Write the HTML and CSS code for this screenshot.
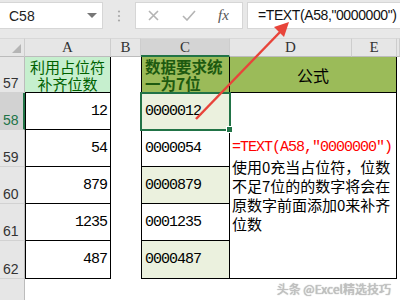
FILE: index.html
```html
<!DOCTYPE html>
<html lang="zh-CN">
<head>
    <meta charset="UTF-8">
    <meta name="viewport" content="width=device-width, initial-scale=1.0">
    <title>TEXT 占位符</title>
    <link rel="stylesheet" href="styles.css">
</head>
<body>
    <div class="toolbar">
        <div class="name-box">
            <span class="name">C58</span>
            <span class="caret"></span>
        </div>
        <div class="grip">
            <svg width="4" height="12" viewBox="0 0 4 12"><circle cx="2" cy="1.5" r="1.1"/><circle cx="2" cy="6" r="1.1"/><circle cx="2" cy="10.5" r="1.1"/></svg>
        </div>
        <div class="fx-box">
            <svg class="btn-x" width="11" height="11" viewBox="0 0 11 11"><path d="M1 1 L10 10 M10 1 L1 10"/></svg>
            <svg class="btn-ok" width="14" height="11" viewBox="0 0 14 11"><path d="M1 6 L5 10 L13 1"/></svg>
            <span class="fx">fx</span>
        </div>
        <div class="formula">=TEXT(A58,"0000000")</div>
    </div>

    <div class="sheet">
        <!-- column headers -->
        <div class="hd corner"></div>
        <div class="hd">A</div>
        <div class="hd">B</div>
        <div class="hd hd-sel">C</div>
        <div class="hd">D</div>
        <div class="hd">E</div>
        <div class="hd"></div>

        <!-- row 57 -->
        <div class="rh">57</div>
        <div class="cell title-a"><span class="ln">利用占位符</span><span class="ln">补齐位数</span></div>
        <div class="cell"></div>
        <div class="cell title-c"><span class="ln">数据要求统</span><span class="ln">一为7位</span></div>
        <div class="cell title-d">公式</div>
        <div class="cell"></div>

        <!-- merged D58:E62 -->
        <div class="cell note">
            <span class="ln note-formula">=TEXT(A58,"0000000")</span>
            <span class="ln">使用0充当占位符，位数</span>
            <span class="ln">不足7位的的数字将会在</span>
            <span class="ln">原数字前面添加0来补齐</span>
            <span class="ln">位数</span>
        </div>

        <div class="rh rh-sel">58</div>
        <div class="cell box edge num">12</div>
        <div class="cell"></div>
        <div class="cell box edge code alt active">0000012</div>
        <div class="cell"></div>

        <div class="rh">59</div>
        <div class="cell box edge num">54</div>
        <div class="cell"></div>
        <div class="cell box edge code">0000054</div>
        <div class="cell"></div>

        <div class="rh">60</div>
        <div class="cell box edge num">879</div>
        <div class="cell"></div>
        <div class="cell box edge code alt">0000879</div>
        <div class="cell"></div>

        <div class="rh">61</div>
        <div class="cell box edge num">1235</div>
        <div class="cell"></div>
        <div class="cell box edge code">0001235</div>
        <div class="cell"></div>

        <div class="rh">62</div>
        <div class="cell box edge num">487</div>
        <div class="cell"></div>
        <div class="cell box edge code alt">0000487</div>
        <div class="cell"></div>

        <div class="rh">63</div>
        <div class="cell rest"></div>
    </div>

    <svg class="arrow" width="400" height="300" viewBox="0 0 400 300">
        <line x1="196" y1="119" x2="281" y2="31"/>
        <polygon points="289,22 284,37 274,27"/>
    </svg>

    <div class="watermark">头条 @Excel精选技巧</div>
</body>
</html>
```

FILE: styles.css
```css
body {
    margin: 0;
    width: 400px;
    height: 300px;
    overflow: hidden;
    position: relative;
    background-color: #fff;
    font-family: "Noto Sans CJK SC", sans-serif;
    color: #000;
}

/* formula bar */
.toolbar {
    height: 38px;
    box-sizing: border-box;
    padding-top: 2px;
    background-color: #e8e8e8;
    display: flex;
    align-items: flex-start;
}

.name-box {
    width: 103px;
    height: 27px;
    box-sizing: border-box;
    background-color: #fff;
    border: 1px solid #d6d6d6;
    border-left: none;
    display: flex;
    align-items: center;
    justify-content: space-between;
    padding: 0 5px 0 9px;
}

.name {
    font-family: "Liberation Sans", sans-serif;
    font-size: 14px;
    color: #222;
}

.caret {
    width: 0;
    height: 0;
    border-left: 5px solid transparent;
    border-right: 5px solid transparent;
    border-top: 5px solid #777;
}

.grip {
    width: 32px;
    height: 27px;
    display: flex;
    align-items: center;
    justify-content: center;
}

.grip svg {
    fill: #a8a8a8;
}

.fx-box {
    width: 108px;
    height: 27px;
    box-sizing: border-box;
    background-color: #fff;
    border: 1px solid #d6d6d6;
    display: flex;
    align-items: center;
    margin-right: 4px;
}

.fx-box svg {
    fill: none;
    stroke: #b4b4b4;
    stroke-width: 1.6;
}

.btn-x {
    margin-left: 12px;
}

.btn-ok {
    margin-left: 23px;
}

.fx {
    margin-left: 22px;
    font-family: "Liberation Serif", serif;
    font-style: italic;
    font-size: 15px;
    color: #555;
}

.formula {
    flex: 1;
    height: 27px;
    box-sizing: border-box;
    background-color: #fff;
    border: 1px solid #d6d6d6;
    border-right: none;
    padding-left: 10px;
    font-family: "Liberation Sans", sans-serif;
    font-size: 14px;
    letter-spacing: -0.4px;
    line-height: 25px;
    color: #111;
}

/* grid */
.sheet {
    display: grid;
    grid-template-columns: 25px 86px 30px 89px 122px 45px 1fr;
    grid-template-rows: 19px 36px 37px 37px 37px 37px 38px 37px;
}

.hd {
    box-sizing: border-box;
    background-color: #e6e6e6;
    border-right: 1px solid #cdcdcd;
    border-bottom: 1px solid #bcbcbc;
    border-top: 1px solid #d8d8d8;
    font-family: "Liberation Serif", serif;
    font-size: 15px;
    line-height: 17px;
    text-align: center;
    color: #333;
}

.corner {
    position: relative;
}

.corner::after {
    content: "";
    position: absolute;
    right: 3px;
    bottom: 3px;
    border-left: 9px solid transparent;
    border-bottom: 9px solid #b5b5b5;
}

.hd-sel {
    background-color: #d4d4d4;
    border-bottom: 2px solid #217346;
}

.rh {
    box-sizing: border-box;
    background-color: #e6e6e6;
    border-right: 1px solid #bcbcbc;
    border-bottom: 1px solid #d2d2d2;
    font-family: "Liberation Sans", sans-serif;
    font-size: 14px;
    line-height: 16px;
    color: #333;
    display: flex;
    align-items: flex-end;
    padding: 0 0 1px 3px;
}

.rh-sel {
    background-color: #d2d2d2;
    border-right: 2px solid #217346;
    color: #217346;
}

.cell {
    box-sizing: border-box;
    background-color: #fff;
}

.ln {
    display: block;
    height: 17px;
    line-height: 17px;
    white-space: nowrap;
}

.box {
    border-right: 1px solid #000;
    border-bottom: 1px solid #000;
}

.edge {
    border-left: 1px solid #000;
}

.title-a {
    background-color: #c6efce;
    color: #006100;
    border-right: 1px solid #000;
    border-bottom: 1px solid #000;
    font-size: 15px;
    text-align: center;
    display: flex;
    flex-direction: column;
    justify-content: center;
}

.title-c {
    background-color: #9bbb59;
    color: #1d5a10;
    font-weight: bold;
    border: 1px solid #000;
    border-top: none;
    font-size: 15.5px;
    padding-left: 3px;
    display: flex;
    flex-direction: column;
    justify-content: center;
}

.title-d {
    grid-column: span 2;
    background-color: #9bbb59;
    border-right: 1px solid #000;
    border-bottom: 1px solid #000;
    font-size: 16px;
    display: flex;
    align-items: center;
    justify-content: center;
}

.num,
.code {
    font-family: "Liberation Mono", monospace;
    font-size: 15px;
    letter-spacing: -1px;
    display: flex;
    align-items: center;
}

.num {
    justify-content: flex-end;
    padding-right: 3px;
}

.code {
    padding-left: 3px;
}

.alt {
    background-color: #ebf1de;
}

.active {
    position: relative;
    z-index: 1;
    outline: 2px solid #217346;
    outline-offset: -1px;
}

.active::after {
    content: "";
    position: absolute;
    right: -4px;
    bottom: -4px;
    width: 5px;
    height: 5px;
    background-color: #217346;
    border: 1px solid #fff;
}

.note {
    grid-column: 5 / 7;
    grid-row: 3 / 8;
    border-right: 1px solid #000;
    border-bottom: 1px solid #000;
    padding-left: 2px;
    display: flex;
    flex-direction: column;
    justify-content: center;
    font-size: 15px;
}

.note .ln {
    height: 19px;
    line-height: 19px;
}

.note-formula {
    font-family: "Liberation Mono", monospace;
    letter-spacing: -1px;
    color: #ff0000;
}

.rest {
    grid-column: 2 / 8;
}

/* red pointer */
.arrow {
    position: absolute;
    top: 0;
    left: 0;
    pointer-events: none;
    z-index: 2;
}

.arrow line {
    stroke: #e8443a;
    stroke-width: 2.5;
}

.arrow polygon {
    fill: #e8443a;
}

.watermark {
    position: absolute;
    right: 9px;
    bottom: 3px;
    font-size: 12px;
    color: #c4c4c4;
    text-shadow: 0 0 1px #888;
}
```
